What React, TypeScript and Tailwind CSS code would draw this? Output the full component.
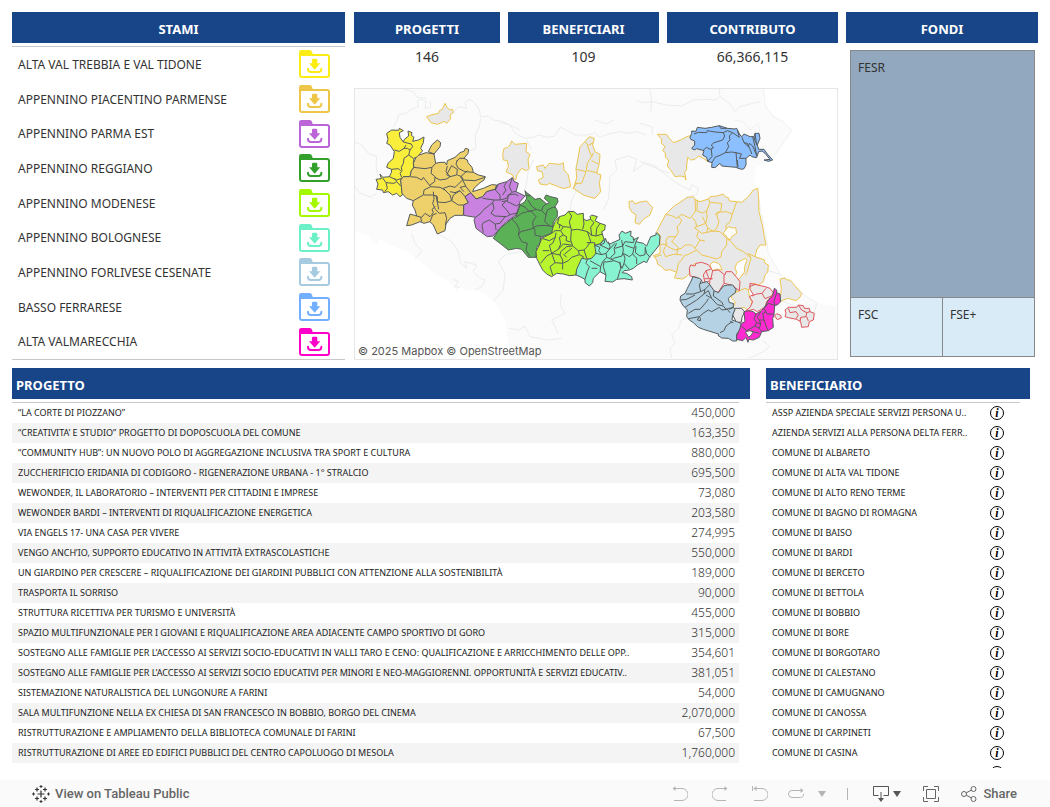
import type { ReactNode } from 'react';

interface Stame {
  name: string;
  color: string;
}

interface Zone {
  id: string;
  origin: string;
  fill: string;
  stroke: string;
  outline: string;
  borders?: string;
}

const stami: Stame[] = [
  { name: 'ALTA VAL TREBBIA E VAL TIDONE', color: '#fbec16' },
  { name: 'APPENNINO PIACENTINO PARMENSE', color: '#edc648' },
  { name: 'APPENNINO PARMA EST', color: '#bb65d8' },
  { name: 'APPENNINO REGGIANO', color: '#33a02c' },
  { name: 'APPENNINO MODENESE', color: '#a4f800' },
  { name: 'APPENNINO BOLOGNESE', color: '#6cf0c8' },
  { name: 'APPENNINO FORLIVESE CESENATE', color: '#a6cbe0' },
  { name: 'BASSO FERRARESE', color: '#72b0ff' },
  { name: 'ALTA VALMARECCHIA', color: '#ff00c8' },
];

const progetti: [string, string][] = [
  ['“LA CORTE DI PIOZZANO”', '450,000'],
  ['“CREATIVITA’ E STUDIO” PROGETTO DI DOPOSCUOLA DEL COMUNE', '163,350'],
  ['“COMMUNITY HUB”: UN NUOVO POLO DI AGGREGAZIONE INCLUSIVA TRA SPORT E CULTURA', '880,000'],
  ['ZUCCHERIFICIO ERIDANIA DI CODIGORO - RIGENERAZIONE URBANA - 1° STRALCIO', '695,500'],
  ['WEWONDER, IL LABORATORIO – INTERVENTI PER CITTADINI E IMPRESE', '73,080'],
  ['WEWONDER BARDI – INTERVENTI DI RIQUALIFICAZIONE ENERGETICA', '203,580'],
  ['VIA ENGELS 17- UNA CASA PER VIVERE', '274,995'],
  ['VENGO ANCH’IO, SUPPORTO EDUCATIVO IN ATTIVITÀ EXTRASCOLASTICHE', '550,000'],
  ['UN GIARDINO PER CRESCERE – RIQUALIFICAZIONE DEI GIARDINI PUBBLICI CON ATTENZIONE ALLA SOSTENIBILITÀ', '189,000'],
  ['TRASPORTA IL SORRISO', '90,000'],
  ['STRUTTURA RICETTIVA PER TURISMO E UNIVERSITÀ', '455,000'],
  ['SPAZIO MULTIFUNZIONALE PER I GIOVANI E RIQUALIFICAZIONE AREA ADIACENTE CAMPO SPORTIVO DI GORO', '315,000'],
  ['SOSTEGNO ALLE FAMIGLIE PER L’ACCESSO AI SERVIZI SOCIO-EDUCATIVI IN VALLI TARO E CENO: QUALIFICAZIONE E ARRICCHIMENTO DELLE OPP..', '354,601'],
  ['SOSTEGNO ALLE FAMIGLIE PER L’ACCESSO AI SERVIZI SOCIO EDUCATIVI PER MINORI E NEO-MAGGIORENNI. OPPORTUNITÀ E SERVIZI EDUCATIV..', '381,051'],
  ['SISTEMAZIONE NATURALISTICA DEL LUNGONURE A FARINI', '54,000'],
  ['SALA MULTIFUNZIONE NELLA EX CHIESA DI SAN FRANCESCO IN BOBBIO, BORGO DEL CINEMA', '2,070,000'],
  ['RISTRUTTURAZIONE E AMPLIAMENTO DELLA BIBLIOTECA COMUNALE DI FARINI', '67,500'],
  ['RISTRUTTURAZIONE DI AREE ED EDIFICI PUBBLICI DEL CENTRO CAPOLUOGO DI MESOLA', '1,760,000'],
];

const beneficiari = [
  'ASSP AZIENDA SPECIALE SERVIZI PERSONA U..',
  'AZIENDA SERVIZI ALLA PERSONA DELTA FERR..',
  'COMUNE DI ALBARETO',
  'COMUNE DI ALTA VAL TIDONE',
  'COMUNE DI ALTO RENO TERME',
  'COMUNE DI BAGNO DI ROMAGNA',
  'COMUNE DI BAISO',
  'COMUNE DI BARDI',
  'COMUNE DI BERCETO',
  'COMUNE DI BETTOLA',
  'COMUNE DI BOBBIO',
  'COMUNE DI BORE',
  'COMUNE DI BORGOTARO',
  'COMUNE DI CALESTANO',
  'COMUNE DI CAMUGNANO',
  'COMUNE DI CANOSSA',
  'COMUNE DI CARPINETI',
  'COMUNE DI CASINA',
];

const WEST = 'translate(-12 -24)';
const CENTER = 'translate(438 96)';
const NORTH_EAST = 'translate(858 -24)';
const ROMAGNA = 'translate(873 291)';
const SOUTH_EAST = 'translate(858 396)';
const COAST = 'translate(-207 306)';

const GREY = '#e8e8e8';
const GOLD = '#edc64f';
const RED = '#e0565c';
const DARK = '#555b5c';

const zones: Zone[] = [
  {
    id: 'lodi', origin: WEST, fill: GREY, stroke: GOLD,
    outline: 'M230 110 240 106 265 100 268 92 277 88 285 70 291 82 300 90 308 88 310 98 300 105 302 116 290 130 282 124 275 128 262 133 243 128Z',
  },
  {
    id: 'fidenza', origin: CENTER, fill: GREY, stroke: GOLD,
    outline: 'M8 103 12 85 22 83 30 75 35 63 45 73 80 70 78 95 90 103 84 118 87 145 80 152 65 145 55 158 50 165 48 178 42 178 38 165 18 155 25 140 22 122 10 120Z',
  },
  {
    id: 'reggiolo', origin: CENTER, fill: GREY, stroke: GOLD,
    outline: 'M110 140 130 135 135 145 148 130 180 133 190 128 192 150 205 165 212 200 190 206 170 198 148 190 140 195 120 192 115 180 130 172 126 155 112 152Z',
  },
  {
    id: 'mirandola', origin: CENTER, fill: GREY, stroke: GOLD,
    outline: 'M255 65 268 50 283 55 278 75 285 95 300 103 298 130 290 160 303 165 298 190 302 215 285 235 272 232 250 225 220 205 230 175 228 145 235 110 240 80Z',
    borders: 'M255 65 265 76 280 68M262 76 270 98 275 110 262 130 258 155 230 148M280 98 275 110M275 122 295 132M262 152 292 158M258 155 245 190 225 190M218 206 232 188',
  },
  {
    id: 'medicina', origin: CENTER, fill: GREY, stroke: GOLD,
    outline: 'M387 245 398 242 405 252 420 246 440 243 450 255 458 262 450 285 430 298 418 313 405 308 408 285 395 276 388 262Z',
  },
  {
    id: 'bondeno', origin: NORTH_EAST, fill: GREY, stroke: GOLD,
    outline: 'M52 163 80 163 88 175 100 188 122 180 140 170 155 166 200 200 203 244 185 232 175 228 165 238 152 240 143 232 140 255 140 268 134 278 138 300 134 290 120 288 105 290 92 270 82 258 86 240 76 232 76 218 68 212 75 200 64 190 65 178Z',
  },
  {
    id: 'romagna', origin: ROMAGNA, fill: GREY, stroke: GOLD,
    outline: 'M62 88 85 65 105 52 125 38 145 35 152 45 165 50 190 42 195 35 215 33 235 27 240 35 250 38 253 48 275 50 290 52 310 35 325 15 338 10 341 40 342 80 352 120 358 155 363 180 345 180 335 195 330 215 345 220 358 225 360 235 370 240 368 262 360 270 355 290 340 300 325 295 305 320 280 325 272 315 276 305 270 290 240 280 225 260 205 258 185 245 150 235 133 250 135 262 125 275 112 282 95 280 88 278 95 262 75 254 60 256 50 245 38 238 35 225 25 212 45 205 45 150 35 140 45 120Z',
    borders: 'M62 88 80 92 95 100 110 88 135 100 142 92 152 78 150 42M157 44 156 78 172 84 186 78M190 42 195 52 185 78 186 100 182 115 172 95M100 95 110 105 104 118 96 125 100 142 92 155 70 155 62 168 66 178 48 178M195 52 230 55 228 75 215 90 222 110 215 130 205 140 188 128 182 115M210 90 216 82 245 80 262 88 275 50M262 88 255 110 242 122 245 140 240 142M188 128 186 142 204 138 225 140 245 160 258 170 275 190 295 200 310 212 318 220 310 206 330 215M245 160 245 180 230 200 228 215 215 222 190 215 170 210 155 195 130 208 118 212 112 222 100 235 95 262M142 98 152 110 155 125 148 128 170 145 186 142M155 125 182 115M160 140 155 155 165 165 180 168M165 165 150 190 140 180 120 180 110 190 90 195 75 188 60 180M92 155 80 170 92 180 100 188 95 208 112 210M60 185 55 200 62 215 85 208 95 208M50 210 30 215M150 190 155 195M318 220 312 240 306 262 300 270',
  },
  {
    id: 'hole-1', origin: ROMAGNA, fill: '#fdfdfd', stroke: GOLD,
    outline: 'M235 144 250 125 262 129 272 128 275 145 260 155 255 165 248 158Z',
  },
  {
    id: 'hole-2', origin: ROMAGNA, fill: '#fdfdfd', stroke: GOLD,
    outline: 'M195 240 205 230 220 235 225 240 232 255 215 252 202 258Z',
  },
  {
    id: 'hole-3', origin: ROMAGNA, fill: '#fdfdfd', stroke: GOLD,
    outline: 'M275 235 285 228 302 220 306 226 300 240 298 262 280 285 270 275 276 262 270 250Z',
  },
  {
    id: 'rimini', origin: SOUTH_EAST, fill: GREY, stroke: GOLD,
    outline: 'M420 178 435 173 440 180 450 180 485 220 480 232 468 242 445 235 420 244 424 205Z',
  },
  {
    id: 'savio', origin: SOUTH_EAST, fill: GREY, stroke: GOLD,
    outline: 'M275 226 290 216 315 205 325 210 328 228 335 245 335 270 320 268 312 262 285 270 280 262 286 245 275 235Z',
  },
  {
    id: 'sogliano', origin: SOUTH_EAST, fill: GREY, stroke: DARK,
    outline: 'M285 265 305 265 314 275 306 292 304 306 290 308 278 285Z',
  },
  {
    id: 'romagna-faentina', origin: SOUTH_EAST, fill: GREY, stroke: RED,
    outline: 'M148 145 152 135 165 138 168 130 185 127 205 134 218 152 235 150 255 165 258 155 275 155 290 172 300 185 298 212 288 205 275 195 252 190 235 217 220 215 208 195 210 182 192 190 180 178 170 172 150 168Z',
    borders: 'M212 148 198 152 190 165 195 188M198 152 205 172 212 180 218 152M252 165 252 190M194 176 218 176',
  },
  {
    id: 'rubicone', origin: SOUTH_EAST, fill: GREY, stroke: RED,
    outline: 'M330 190 352 195 375 200 390 205 400 218 392 232 380 245 375 262 352 275 340 268 315 275 330 262 338 245 328 230 340 224 330 208Z',
    borders: 'M336 228 350 222 366 220 378 205M366 220 375 236 395 228M328 200 348 192',
  },
  {
    id: 'conca', origin: SOUTH_EAST, fill: GREY, stroke: RED,
    outline: 'M435 270 445 262 470 262 475 255 490 257 493 265 508 265 510 275 523 280 520 300 508 305 505 320 485 322 482 305 470 298 445 293 435 290 438 280Z',
    borders: 'M445 265 450 278 468 275 475 285 468 296M475 255 485 270 500 278 510 275M500 278 498 290 482 292 480 305M500 290 505 303',
  },
  {
    id: 'montefeltro', origin: SOUTH_EAST, fill: GREY, stroke: RED,
    outline: 'M404 288 410 281 422 286 424 294 412 299Z',
  },
  {
    id: 'trebbia', origin: WEST, fill: '#faee3d', stroke: DARK,
    outline: 'M110 160 125 150 146 151 148 145 160 152 148 158 150 172 160 186 163 178 176 168 174 153 186 158 184 166 192 172 188 184 205 180 222 171 220 188 212 205 218 213 208 222 214 230 192 234 190 250 192 262 184 272 180 290 160 290 152 300 156 325 157 345 150 350 140 340 128 345 115 335 100 338 98 330 80 328 84 312 78 298 94 296 90 282 98 292 118 290 124 278 125 268 110 262 114 250 130 235 133 215 120 195 110 190 114 178Z',
    borders: 'M133 210 148 214 162 205 172 205 180 210 188 200 184 192 160 186M162 205 168 195M180 210 176 225 190 235M176 225 162 235 160 250 154 262 156 272 150 280 155 292M125 268 145 266 152 272M118 290 140 300 155 295M98 294 108 308 132 310 140 305 152 318M108 308 112 325 104 335M140 305 134 295',
  },
  {
    id: 'piacentino', origin: WEST, fill: '#efd16b', stroke: DARK,
    outline: 'M197 234 205 226 228 218 252 222 235 215 245 195 262 180 272 188 270 200 252 222 257 250 270 247 285 247 290 255 292 242 315 232 330 218 343 213 346 205 356 208 354 220 342 235 352 240 354 248 366 262 370 277 385 285 406 290 402 300 390 308 372 325 368 335 400 325 425 314 440 315 435 328 410 335 398 350 378 357 362 338 345 350 355 368 341 375 340 406 315 406 300 415 288 432 285 452 262 462 250 435 240 425 222 430 210 425 185 435 170 437 180 402 200 408 195 390 187 375 190 362 170 355 156 340 152 300 160 290 180 290 184 272 192 262 190 250Z',
    borders: 'M182 290 200 292 215 300 220 292 242 320 222 330 220 345 190 362M190 262 225 266 246 262 257 250M246 262 243 280 255 290 254 305 240 315M255 292 270 300 290 297 300 290 288 275 292 258M300 290 290 284 305 257 322 268 320 285 300 290M322 240 318 252 325 265 345 275 370 277M320 245 328 235 345 235M322 285 335 290 340 300 375 302 404 292M338 300 332 290 352 272M242 320 270 322 285 330 280 325 300 318 315 322 338 300M285 330 300 345 305 362 285 368 262 366 262 350 250 345 222 345M300 335 315 338 330 332 345 350M338 300 348 320 362 338M348 318 330 322 342 335M250 335 252 358 248 370 256 388 268 400 285 398 290 415 286 436M258 345 266 388M200 408 215 412 225 400 240 410 250 398 246 388 256 380M215 425 212 412M240 425 248 405 260 400M305 362 325 375 341 375M305 362 310 345 330 332',
  },
  {
    id: 'parma-est', origin: WEST, fill: '#c982df', stroke: DARK,
    outline: 'M341 375 355 368 345 350 362 338 378 357 398 350 410 335 435 328 445 312 470 305 487 293 492 304 505 310 498 335 525 348 510 365 508 378 498 405 470 425 445 450 430 468 412 470 395 458 378 445 372 420 376 412 341 406Z',
    borders: 'M376 412 390 402 402 388 428 368 432 360 398 355M432 360 450 360 470 355 475 345 490 335 498 335M445 312 436 330 450 345 450 360M470 305 462 320 468 330 458 345M487 293 478 320 485 335M428 368 432 385 423 400 435 408 470 410 480 404 505 398M455 365 470 362 456 375 468 388 480 404M475 345 472 365 500 378 508 372M400 458 396 436 400 428 418 420 436 432 450 430 465 410M436 432 438 450M475 345 495 342 505 348',
  },
  {
    id: 'reggiano', origin: CENTER, fill: '#5bb156', stroke: DARK,
    outline: 'M75 212 80 218 90 225 105 238 120 235 140 252 148 248 133 235 138 225 152 230 172 235 174 245 165 260 172 272 172 290 160 305 158 330 155 340 140 345 122 352 120 370 110 382 108 412 85 412 65 388 50 385 25 390 10 378 0 370 -20 355 0 325 35 297 48 290 60 255 75 245 80 235Z',
    borders: 'M35 297 50 312 58 328 55 345 62 335 100 325 98 305 108 290 92 272 65 280 48 292M60 255 76 262 88 275 108 268 95 258 84 240M75 225 90 228M108 268 125 272 130 258 140 252M125 272 138 285 134 305 150 318 160 320M100 325 108 318 132 316 150 318M138 285 142 270 158 262 168 262M104 325 105 345 125 350M55 345 65 365 82 370 78 390 90 410',
  },
  {
    id: 'modenese', origin: CENTER, fill: '#b8f52f', stroke: DARK,
    outline: 'M158 325 165 305 178 290 195 285 205 274 222 275 232 283 250 280 250 295 258 302 272 298 270 290 275 285 292 290 285 302 300 310 316 315 314 330 305 335 312 358 300 372 284 376 290 390 286 405 275 415 262 418 245 438 230 448 228 465 208 467 190 462 170 460 155 470 140 462 128 450 120 435 110 415 108 395 118 375 125 355 155 340Z',
    borders: 'M214 330 232 328 252 332 262 335 268 352 272 364 260 382 252 390 235 392 218 378 212 360 214 330M178 290 172 310 190 320 212 322 214 330M205 274 215 288 208 305 212 322M250 295 252 312 248 328M190 320 182 332 190 345 200 350 198 362 212 366M178 325 180 312M190 345 178 352 182 372 175 388 190 372 215 375M155 340 165 332 182 332M125 355 148 362 166 352 168 338M166 352 158 370 148 376 155 400 175 388M155 400 140 408 122 430M155 400 180 405 182 395 200 380 218 378M180 405 188 420 188 430 165 428 150 440 158 465M165 428 155 400M188 430 205 422 215 412 238 404 250 410 246 425M188 430 188 448M194 402 216 384M200 412 190 402M262 335 275 345 272 322 282 308 272 298M272 345 288 348 290 325 300 310M288 348 308 342M260 368 284 368 284 376M252 390 258 408 262 418M238 404 235 392M128 392 148 392',
  },
  {
    id: 'bolognese', origin: CENTER, fill: '#88f3d1', stroke: DARK,
    outline: 'M316 355 322 368 330 372 345 365 360 358 357 345 366 333 376 340 393 333 392 348 400 352 400 360 415 352 408 365 430 370 440 378 452 350 468 345 468 338 480 348 478 375 462 395 448 412 440 428 432 424 412 435 400 445 388 450 372 452 366 458 380 460 395 470 397 480 372 476 350 478 338 486 315 484 318 465 300 455 290 465 280 475 278 488 268 498 255 488 255 478 240 470 228 465 230 448 245 415 262 418 275 415 288 400 284 376 300 372Z',
    borders: 'M316 355 312 370 300 375 328 388 330 380 325 365M284 376 300 382 296 392 305 404 288 400M328 388 318 400 305 404M328 388 345 370M318 400 320 412 340 420 332 412 345 400 342 385 350 370M320 412 308 425 302 440 270 422M345 385 368 378 365 360M368 378 370 390 366 408 340 415M368 378 375 365 400 368M376 376 402 385 408 365M402 385 398 402 388 410 370 400M408 378 406 398 420 408 435 404 436 380M398 402 410 415 410 432M436 385 440 400 450 412M370 400 375 415 372 430 366 445 358 428 342 422 320 426 312 425 310 440 318 465M372 430 388 448M302 440 300 455M262 418 258 430 268 440 262 455 255 478M400 368 404 356M275 445 292 445M360 425 362 445 352 478',
  },
  {
    id: 'ferrarese', origin: NORTH_EAST, fill: '#8cbfff', stroke: DARK,
    outline: 'M155 160 155 153 168 154 172 142 195 145 215 142 238 137 262 145 285 147 290 145 300 165 306 170 312 162 330 170 342 170 345 160 357 160 360 175 352 195 356 208 372 208 382 222 398 240 385 244 372 240 390 238 375 220 366 213 356 215 350 233 335 230 330 225 318 235 318 255 312 266 305 268 292 264 288 262 245 258 240 250 225 263 215 262 216 248 203 244 200 232 188 225 192 212 170 206 162 210 155 205 164 195 164 183 152 178 150 172Z',
    borders: 'M162 162 175 157 200 158 202 152 225 156 250 158 262 152 278 158 298 172M250 158 254 168 248 180 222 188 214 195 220 204 210 208 200 202 190 210M278 158 268 168 270 180 262 188 266 200 256 218 275 216 288 218 292 262M214 208 216 230 203 244M256 218 240 226 225 232 216 248M238 137 242 145 262 145M298 172 292 150M306 172 312 188 322 190 332 212 335 222M312 188 325 200 328 190 338 198 345 215 350 225M342 170 346 185 352 195M338 170 345 200 350 228M288 218 305 222 298 235 318 235M292 240 294 262M345 160 350 195',
  },
  {
    id: 'forlivese', origin: SOUTH_EAST, fill: '#b4d2e4', stroke: DARK,
    outline: 'M155 180 158 170 178 175 185 180 180 190 200 185 208 192 222 212 235 218 250 198 262 195 278 195 288 208 286 218 275 226 265 235 268 248 280 250 280 262 285 268 278 285 276 300 290 305 304 310 300 330 290 342 290 363 278 363 265 355 245 354 234 346 236 342 190 328 175 322 160 308 148 300 140 290 142 270 128 255 120 240 122 228 135 220 142 205Z',
    borders: 'M138 222 160 222 182 215 178 195 182 188M182 215 195 208 208 195M122 240 140 238 165 225M195 208 192 222 170 240 135 262M192 222 205 212 215 235 232 254 250 258 258 268 280 262M215 235 198 225M222 212 220 228 245 246 250 255M145 280 165 268 180 268 200 245 205 236M145 296 178 290 192 278 205 270 215 275 238 262 245 270 262 268 270 278M178 290 172 300 182 302 180 292M280 262 268 268M276 305 258 318 252 332 240 338M270 305 280 308',
  },
  {
    id: 'valmarecchia', origin: SOUTH_EAST, fill: '#ff2bd0', stroke: DARK,
    outline: 'M300 325 304 310 315 305 312 275 325 272 340 275 348 282 365 272 378 255 385 240 398 228 403 205 410 210 410 218 420 222 422 245 412 255 404 256 402 285 398 295 400 322 385 332 365 335 358 352 340 360 326 358 324 367 318 352 308 362 290 358 290 348Z',
    borders: 'M304 318 320 332 345 318 350 308 342 295 348 282M350 308 362 312 358 300 352 292 362 275M358 300 372 300 368 280 378 275 382 282 402 282M378 275 372 265 385 250 404 256M362 312 358 325 365 335M372 300 378 318 385 332M345 318 358 325M340 335 358 340M404 256 402 245 410 218',
  },
  {
    id: 'san-marino', origin: SOUTH_EAST, fill: '#ffffff', stroke: DARK,
    outline: 'M316 336 328 332 340 335 334 345 326 352Z',
  },
];

const rivers = [
  { origin: WEST, d: 'M12 185 35 195 55 220 80 230 78 258 84 290 M12 315 30 340 45 345 62 352 80 340M130 140 142 120 145 105 165 100 190 85 205 80 202 62 215 58 228 65 225 85 242 82 240 62M310 100 325 80 350 85 345 68 360 58 375 70 388 88 392 110 415 108 430 120 460 125 490 140 510 150M392 115 388 140 375 165 378 205 358 212M160 28 190 35 202 52 230 55' },
  { origin: CENTER, d: 'M0 8 30 15 45 40 75 55 100 52 115 45 145 52 165 48 180 22 200 30 225 45 265 45 285 38 300 52 325 42 360 35 385 40 410 35 440 45M285 0 320 12 340 0M75 212 85 155 100 120M345 120 385 108 410 118 400 155 435 130 480 150 510 160M345 120 350 150 330 170 325 240 310 270M80 60 95 90M230 210 215 240 210 272' },
  { origin: NORTH_EAST, d: 'M-10 60 5 68 35 65 80 75 125 78 160 60 200 58 225 60 240 50 238 28M240 50 255 60 275 78 285 95 300 80 330 72 360 65M0 130 35 140 38 165M0 245 40 255 85 290 110 310M110 310 150 330 155 315 175 325 170 345 140 350M28 20 35 60 32 95' },
  { origin: COAST, d: 'M380 130 390 160 412 185 390 205M465 135 500 155 520 185 525 215 545 235 540 215 575 225 565 245 585 265 600 270 590 290 570 300M725 180 660 195 640 215 660 250 655 300 628 332M672 415 700 420 720 408 735 440 790 450 830 445M830 310 825 345 840 370 800 390 820 430M505 268 520 275 510 290 525 292' },
  { origin: SOUTH_EAST, d: 'M140 295 125 300 115 325 95 345 105 370 90 385 95 415M325 415 350 405 370 395 388 380 370 362 380 370M380 150 425 165M430 245 500 270M530 250 522 280' },
];

function FolderDownload({ color }: { color: string }) {
  return (
    <svg viewBox="0 0 93 84" className="h-7 w-[31px]" aria-hidden="true">
      <path d="M0 17V7Q0 0 7 0H32Q37 0 39 5L41 12H60V17Z" fill={color} />
      <path d="M3 15H84Q90 15 90 21V75Q90 81 84 81H9Q3 81 3 75Z" fill="none" stroke={color} strokeWidth="6" />
      <path d="M39 30Q39 26 43 26H51Q55 26 55 30V40H64L47 59 30 40H39Z" fill={color} />
      <path d="M27 56V58Q27 66 36 66H58Q67 66 67 58V56" fill="none" stroke={color} strokeWidth="6" strokeLinecap="round" />
    </svg>
  );
}

function RegionMap() {
  return (
    <svg viewBox="3 3 1446 810" className="block w-full" role="img" aria-label="Mappa degli stami">
      <rect width="1452" height="816" fill="#fbfbfb" />
      <path
        transform={COAST}
        d="M207 125 250 138 262 160 285 165 280 145 305 160 350 180 370 185 400 210 430 235 455 255 490 275 515 305 525 290 545 302 575 300 600 312 640 350 662 395 665 430 672 460 674 510 207 510Z"
        fill="#fff"
      />
      <path
        transform={NORTH_EAST}
        d="M370 24 375 75 400 110 430 125 455 150 440 175 415 210 390 250 350 260 342 290 350 325 362 390 380 480 385 520 405 555 425 590 460 620 500 650 530 668 594 680V24Z"
        fill="#fff"
      />
      {rivers.map((river) => (
        <path key={river.origin} transform={river.origin} d={river.d} fill="none" stroke="#eaeded" strokeWidth="3" strokeLinejoin="round" />
      ))}
      <path
        transform={NORTH_EAST}
        d="M370 24 375 75 400 110 430 125 455 150 440 175 415 210 390 245M280 120 310 125 330 150 355 130 360 160M350 325 362 390 380 480 385 520 405 555 425 590 460 620 500 650 530 668"
        fill="none"
        stroke="#f0f1f1"
        strokeWidth="3"
      />
      {zones.map((zone) => (
        <g key={zone.id} transform={zone.origin} stroke={zone.stroke} strokeWidth="3" strokeLinejoin="round">
          <path d={zone.outline} fill={zone.fill} />
          {zone.borders && <path d={zone.borders} fill="none" />}
        </g>
      ))}
    </svg>
  );
}

function Heading({ children, className = 'text-center' }: { children: ReactNode; className?: string }) {
  return (
    <h2 className={`h-[31px] bg-[#174588] pt-[3px] text-[13px] leading-7 font-bold text-white ${className}`}>
      {children}
    </h2>
  );
}

function Kpi({ label, value, className }: { label: string; value: string; className: string }) {
  return (
    <div className={className}>
      <Heading>{label}</Heading>
      <p className="pt-1 text-center text-sm leading-5">{value}</p>
    </div>
  );
}

function InfoButton({ label }: { label: string }) {
  return (
    <button
      type="button"
      aria-label={label}
      className="flex h-[14px] w-[14px] items-center justify-center rounded-full border border-black font-['Liberation_Serif',serif] text-xs leading-none font-bold text-black italic"
    >
      i
    </button>
  );
}

function ToolButton({ label, children, muted }: { label: string; children: ReactNode; muted?: boolean }) {
  return (
    <button type="button" aria-label={label} className={muted ? 'text-[#b5b5b5]' : 'text-[#666]'}>
      {children}
    </button>
  );
}

function TableauMark() {
  return (
    <svg viewBox="0 0 18 18" className="h-[18px] w-[18px]" fill="none" stroke="#333" aria-hidden="true">
      <path d="M9 5.500v7M5.500 9h7" strokeWidth="1.200" />
      <path d="M5 2.500v4M3 4.500h4M13 2.500v4M11 4.500h4M5 11.500v4M3 13.500h4M13 11.500v4M11 13.500h4" strokeWidth="1.200" />
      <path d="M9 0v3M7.500 1.500h3M9 15v3M7.500 16.500h3M1.500 7.500v3M0 9h3M16.500 7.500v3M15 9h3" />
    </svg>
  );
}

function Toolbar() {
  return (
    <footer className="flex h-[27px] shrink-0 items-center justify-between bg-[#fafafa] pr-[33px] pl-8 font-['Roboto',sans-serif] text-[13px] font-medium text-[#666]">
      <a href="#tableau" className="flex items-center gap-[5px]">
        <TableauMark />
        View on Tableau Public
      </a>
      <div className="flex items-center">
        <div className="flex items-center gap-6">
          <ToolButton label="Undo" muted>
            <svg viewBox="0 0 16 16" className="h-4 w-4" fill="none" stroke="currentColor">
              <path d="M1 2.500H10A6 6 0 0 1 10 14.500H2" />
              <path d="M3.500 0 .500 2.500 3.500 5Z" fill="currentColor" stroke="none" />
            </svg>
          </ToolButton>
          <ToolButton label="Redo" muted>
            <svg viewBox="0 0 16 16" className="h-4 w-4" fill="none" stroke="currentColor">
              <path d="M15 2.500H6A6 6 0 0 0 6 14.500H14" />
              <path d="M12.500 0 15.500 2.500 12.500 5Z" fill="currentColor" stroke="none" />
            </svg>
          </ToolButton>
          <ToolButton label="Revert" muted>
            <svg viewBox="0 0 16 16" className="h-4 w-4" fill="none" stroke="currentColor">
              <path d="M.500 0V5M2 2.500H10A6 6 0 0 1 10 14.500H2" />
              <path d="M4.500 0 1.500 2.500 4.500 5Z" fill="currentColor" stroke="none" />
            </svg>
          </ToolButton>
        </div>
        <div className="ml-5 flex items-center gap-[14px]">
          <ToolButton label="Refresh" muted>
            <svg viewBox="0 0 16 16" className="h-4 w-4" fill="none" stroke="currentColor">
              <path d="M14 4.500H4A3.500 3.500 0 0 0 4 11.500H12.500A3 3 0 0 0 15.500 8" />
              <path d="M12.500 2 15.500 4.500 12.500 7Z" fill="currentColor" stroke="none" />
            </svg>
          </ToolButton>
          <ToolButton label="Pause options" muted>
            <svg viewBox="0 0 8 6" className="h-[6px] w-2" fill="currentColor">
              <path d="M0 0H8L4 6Z" />
            </svg>
          </ToolButton>
        </div>
        <span className="mx-[21px] h-3 w-px bg-[#b5b5b5]" />
        <div className="ml-1 flex items-center gap-[22px]">
          <button type="button" aria-label="Download" className="flex items-center gap-1 text-[#555]">
            <svg viewBox="0 0 16 16" className="h-4 w-4" fill="none" stroke="currentColor">
              <path d="M5.500 9.500H.500V.500H15.500V9.500H10.500M8 6V13" />
              <path d="M5 12H11L8 16Z" fill="currentColor" stroke="none" />
            </svg>
            <svg viewBox="0 0 8 6" className="h-[6px] w-2" fill="currentColor">
              <path d="M0 0H8L4 6Z" />
            </svg>
          </button>
          <ToolButton label="Full screen">
            <svg viewBox="0 0 16 16" className="h-4 w-4" fill="none" stroke="currentColor">
              <path d="M.500 5V.500H5M11 .500H15.500V5M15.500 11V15.500H11M5 15.500H.500V11M3.500 3.500H12.500V12.500H3.500Z" />
            </svg>
          </ToolButton>
          <button type="button" className="flex items-center gap-[6px]">
            <svg viewBox="0 0 16 16" className="h-4 w-4" fill="none" stroke="currentColor">
              <circle cx="3" cy="8" r="2.500" />
              <circle cx="12.500" cy="3" r="2.500" />
              <circle cx="12.500" cy="13" r="2.500" />
              <path d="M5.200 6.800 10.300 4.200M5.200 9.200 10.300 11.800" />
            </svg>
            Share
          </button>
        </div>
      </div>
    </footer>
  );
}

export default function App() {
  return (
    <div className="flex h-screen flex-col bg-white font-['Noto_Sans',sans-serif] text-[#333]">
      <main className="flex min-h-0 flex-1 flex-col gap-2 pt-3 pb-3 pl-3">
        <div className="flex gap-2 pr-3">
          <section className="mr-px flex w-[333px] shrink-0 flex-col">
            <Heading>STAMI</Heading>
            <ul className="mt-[3px] flex flex-1 flex-col border-y border-[#c8c8c8]">
              {stami.map((stame) => (
                <li key={stame.name} className="flex flex-1 items-center justify-between pr-[15px] pl-[6px] text-xs">
                  <span className="pt-px">{stame.name}</span>
                  <button type="button" aria-label={`Scarica ${stame.name}`}>
                    <FolderDownload color={stame.color} />
                  </button>
                </li>
              ))}
            </ul>
          </section>

          <section className="min-w-0 flex-1">
            <div className="flex gap-2">
              <Kpi label="PROGETTI" value="146" className="w-[146px]" />
              <Kpi label="BENEFICIARI" value="109" className="w-[151px]" />
              <Kpi label="CONTRIBUTO" value="66,366,115" className="flex-1" />
            </div>
            <div className="relative mt-[21px] border border-[#e6e6e6]">
              <RegionMap />
              <p className="absolute bottom-0 left-[3px] font-['Inter',sans-serif] text-[11px] leading-4 text-[#555]">
                © 2025 Mapbox © OpenStreetMap
              </p>
            </div>
          </section>

          <section className="flex w-48 shrink-0 flex-col">
            <Heading>FONDI</Heading>
            <div className="mt-[7px] mr-[3px] mb-[3px] ml-1 flex flex-1 flex-col border border-[#888] text-xs text-[#333]">
              <div className="flex-1 bg-[#92a8be] px-[7px] py-[9px]">FESR</div>
              <div className="flex h-[59px] border-t border-[#888] bg-[#daebf8]">
                <div className="flex-1 border-r border-[#888] px-[7px] py-[9px]">FSC</div>
                <div className="flex-1 px-[7px] py-[9px]">FSE+</div>
              </div>
            </div>
          </section>
        </div>

        <div className="flex min-h-0 flex-1 gap-4 pr-5">
          <section className="flex min-w-0 flex-1 flex-col">
            <Heading className="pl-1">PROGETTO</Heading>
            <div className="mt-[3px] mr-[11px] min-h-0 flex-1 overflow-hidden border-t border-[#c8c8c8]">
              <table className="w-full table-fixed border-collapse">
                <tbody>
                  {progetti.map(([name, amount]) => (
                    <tr key={name} className="h-5 even:bg-[#f4f4f4]">
                      <td className="truncate p-0 pl-[6px] text-[9px] leading-5 text-[#222]">{name}</td>
                      <td className="w-[100px] p-0 pr-1 text-right text-xs leading-5 font-light">{amount}</td>
                    </tr>
                  ))}
                </tbody>
              </table>
            </div>
          </section>

          <section className="flex w-[264px] shrink-0 flex-col">
            <Heading className="pl-1">BENEFICIARIO</Heading>
            <div className="mt-[3px] mr-[10px] min-h-0 flex-1 overflow-hidden border-t border-[#c8c8c8]">
              <table className="w-full table-fixed border-collapse">
                <tbody>
                  {beneficiari.map((name) => (
                    <tr key={name} className="h-5">
                      <td className="p-0 pl-[6px] text-[9px] leading-5 whitespace-nowrap text-[#222]">{name}</td>
                      <td className="w-[30px] p-0">
                        <InfoButton label={`Dettagli ${name}`} />
                      </td>
                    </tr>
                  ))}
                  <tr className="h-5">
                    <td className="p-0" />
                    <td className="w-[30px] p-0">
                      <span className="block h-[14px] w-[14px] rounded-full border border-black" />
                    </td>
                  </tr>
                </tbody>
              </table>
            </div>
          </section>
        </div>
      </main>
      <Toolbar />
    </div>
  );
}
